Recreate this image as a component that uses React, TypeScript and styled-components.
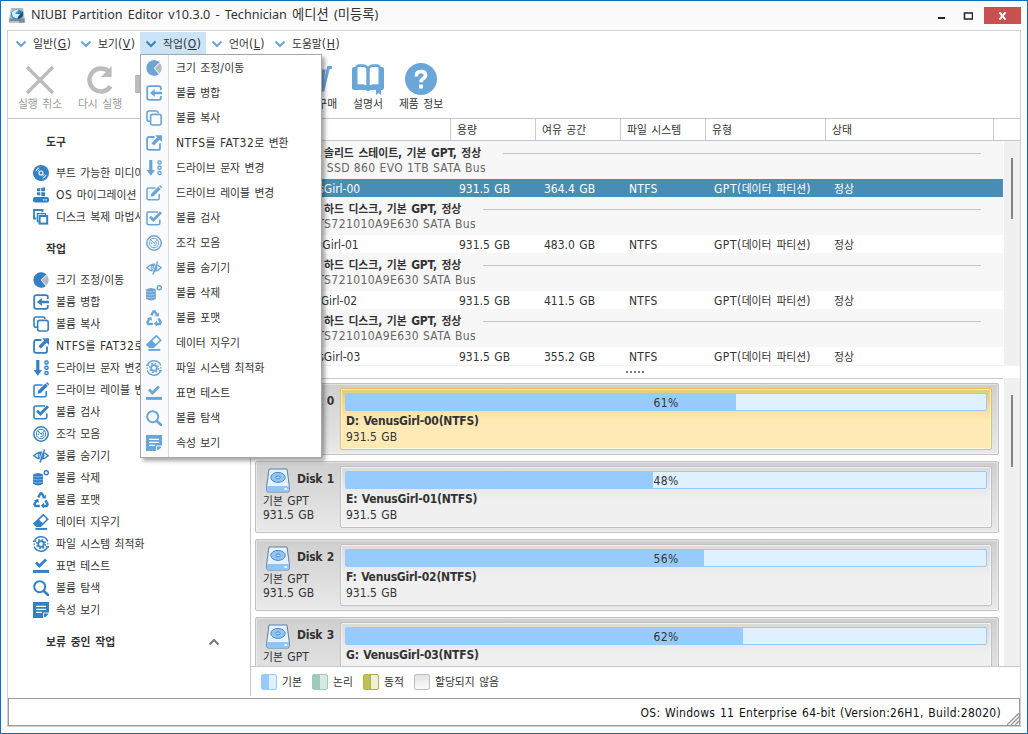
import React from "react";
import styled, { createGlobalStyle, css } from "styled-components";

const Global = createGlobalStyle`
  * { box-sizing: border-box; }
  body { margin: 0; background: #fff; overflow: hidden; }
`;

const latin = `"DejaVu Sans Condensed", "DejaVu Sans", "Noto Sans CJK KR", sans-serif`;

/* ---------- text ---------- */

const Hangul = styled.span`
  font-family: "Noto Sans CJK KR", sans-serif;
  font-size: 0.9em;
  line-height: 1;
  letter-spacing: 0;
`;

const mixed = (text: string) =>
  text
    .split(/([\uac00-\ud7a3]+)/)
    .filter(Boolean)
    .map((part, i) => (/[\uac00-\ud7a3]/.test(part) ? <Hangul key={i}>{part}</Hangul> : part));

const Label = styled.span<{ $bold?: boolean; $color?: string; $ls?: number; $ws?: number }>`
  display: block;
  height: 16px;
  line-height: 16px;
  white-space: pre;
  font-weight: ${(p) => (p.$bold ? 700 : 400)};
  color: ${(p) => p.$color ?? "inherit"};
  letter-spacing: ${(p) => p.$ls ?? 0}px;
  word-spacing: ${(p) => p.$ws ?? 1}px;
`;

/* ---------- icons ---------- */

const s = { fill: "none", stroke: "currentColor", strokeWidth: 1.8 } as const;

const glyphs: Record<string, React.ReactNode> = {
  disc: (
    <>
      <circle cx="8" cy="8" r="8" fill="currentColor" />
      <circle cx="8" cy="8" r="2" fill="none" stroke="#fff" strokeWidth="1.1" />
      <path d="M2.8 6.2A5.5 5.5 0 0 1 6.2 2.8M13.2 9.8a5.5 5.5 0 0 1-3.4 3.4M4.8 6.4A3.6 3.6 0 0 1 6.4 4.8M11.2 9.6A3.6 3.6 0 0 1 9.6 11.2" fill="none" stroke="#fff" strokeWidth="1" />
    </>
  ),
  os: (
    <>
      <path d="M4 1.6l3.3-.6v3.3H4zM8.2.9l3.8-.7v4.1H8.2zM4 5.2h3.3v3.4L4 8.1zM8.2 5.2H12v4L8.2 8.7z" fill="currentColor" />
      <rect x="0" y="10" width="16" height="5.6" rx="2" fill="currentColor" />
      <path d="M10 12.8h1.4M12.4 12.8h1.4" stroke="#fff" strokeWidth="1.2" />
    </>
  ),
  clone: (
    <>
      <path d="M3.3 9.5H1V1h8.500v2" {...s} />
      <path d="M7 12.5H4.4V4.6h8v2" {...s} strokeWidth={1.3} />
      <rect x="6.6" y="7" width="7.600" height="7.600" fill="#fff" stroke="currentColor" strokeWidth="2" />
    </>
  ),
  pie: (
    <>
      <circle cx="8" cy="8" r="7.7" fill="#b4bac3" />
      <path d="M13.8 2.6A7.7 7.7 0 1 0 13 14L8.2 8z" fill="currentColor" />
      <path d="M13.8 2.6L8.2 8l5 6" fill="none" stroke="#fff" strokeWidth="1" />
    </>
  ),
  merge: (
    <>
      <path d="M14.8 5V3Q14.8 1.2 13 1.2H3.2Q1.2 1.2 1.2 3.2v9.6Q1.2 14.8 3.2 14.8H13q1.8 0 1.8-1.8v-2" {...s} />
      <path d="M4 8l4.8-4v2.7H16v2.6H8.8V12z" fill="currentColor" />
    </>
  ),
  copy: (
    <>
      <path d="M4 11.2H3Q1 11.2 1 9.2V3Q1 1 3 1h7.2q1.8 0 1.8 2" {...s} strokeWidth={1.6} />
      <rect x="4.6" y="4.4" width="10.6" height="10.6" rx="2" fill="none" stroke="currentColor" strokeWidth="1.6" />
    </>
  ),
  convert: (
    <>
      <path d="M8.5 2H3Q1.1 2 1.1 4v9q0 1.9 2 1.9H12q2 0 2-2V8.6" {...s} />
      <path d="M9.3.2H16v6.7l-2.3-2.2-5.9 5.9-2.4-2.4 5.9-5.8z" fill="currentColor" />
    </>
  ),
  letter: (
    <>
      <path d="M3.2 0h3.2v10H9L4.8 15.8.6 10h2.6z" fill="currentColor" />
      <g fill="none" stroke="currentColor" strokeWidth="1.4">
        <rect x="12" y="1" width="3" height="3" rx="1" />
        <rect x="12" y="6.2" width="3" height="3" rx="1" />
        <rect x="12" y="11.5" width="3" height="3" rx="1" />
      </g>
    </>
  ),
  edit: (
    <>
      <path d="M9.5 3H2.6Q1 3 1 4.6v8.6q0 1.6 1.6 1.6h9q1.6 0 1.6-1.6V9" {...s} strokeWidth={1.5} />
      <path d="M4.6 11.8l.8-3.2 7-7 2.4 2.4-7 7z" fill="currentColor" />
      <path d="M13 1l1-1 2.2 2.2-1 1z" fill="currentColor" />
    </>
  ),
  check: (
    <>
      <path d="M12 2H2.6Q1 2 1 3.6v9.6q0 1.6 1.6 1.6h9.6q1.6 0 1.6-1.6V9.6" {...s} strokeWidth={1.6} />
      <path d="M4 6.8L7.4 10l7.6-7.8" {...s} strokeWidth={2.8} />
    </>
  ),
  defrag: (
    <>
      <circle cx="8" cy="8" r="7.2" {...s} strokeWidth={1.5} />
      <circle cx="8" cy="8" r="4.7" {...s} strokeWidth={1} />
      <path d="M4.5 4.5L8 8l3.6-3.2M8.2 8l1.2 1.2M5.6 9.2a2.6 2.6 0 0 1 1-3M10.4 7a2.6 2.6 0 0 1-3 3.6" {...s} strokeWidth={1} />
    </>
  ),
  hide: (
    <>
      <path d="M.8 7.8Q8 .6 15.2 7.8 8 14.6.8 7.8z" {...s} strokeWidth={1.4} />
      <circle cx="8" cy="7.6" r="3.4" fill="currentColor" />
      <path d="M6.4 6q-.8 1.4 0 2.8" fill="none" stroke="#fff" strokeWidth=".8" />
      <path d="M11.4 1.6L7 14.4" {...s} strokeWidth={1.6} />
      <path d="M10.1 2.4L6.2 13" stroke="#fff" strokeWidth=".7" />
    </>
  ),
  remove: (
    <>
      <path d="M0 4.5Q5 1.4 10 4.5v9.2Q5 17.3 0 13.7z" fill="currentColor" />
      <path d="M0 6.2q5 1.8 10 0M0 9.1q5 1.8 10 0M0 12q5 1.8 10 0" fill="none" stroke="#fff" strokeWidth=".5" opacity=".75" />
      <circle cx="13.3" cy="2.7" r="2" {...s} strokeWidth={1.5} />
    </>
  ),
  recycle: (
    <>
      <path d="M5.3 5.3L7.4 1.5h1.4l2 3.3" {...s} strokeWidth={2.4} />
      <path d="M3.4 8.6l-2 3.7.9 1.7h4.5" {...s} strokeWidth={2.4} />
      <path d="M12.4 8.4l2.2 3.9-.9 1.7h-3" {...s} strokeWidth={2.4} />
      <path d="M8.8 6.2l3.9.4.5-4zM1 8.6l4.2-1.8.9 4zM11 10.6v6L7.9 13.8z" fill="currentColor" />
    </>
  ),
  erase: (
    <>
      <path d="M10.3.8l4.4 4.4-7.2 7H3.4L1 9.6z" {...s} strokeWidth={1.6} />
      <path d="M5.4 5l4.8 4.6-2.7 2.8H3.4L.6 9.6z" fill="currentColor" />
      <path d="M2.4 14.9h11.8" {...s} strokeWidth={2} />
    </>
  ),
  optimize: (
    <>
      <path d="M1.6 4.6A7.3 7.3 0 0 1 14.8 5.4M14.4 11.4A7.3 7.3 0 0 1 1.2 10.6" {...s} strokeWidth={1.4} />
      <circle cx="8" cy="8" r="2.8" {...s} strokeWidth={1.8} />
      <circle cx="8" cy="8" r="4.3" {...s} strokeWidth={1.6} strokeDasharray="1.69 1.69" />
      <path d="M0 5.2h3.2M12.8 10.8H16M.6 8.2h1.2M14.2 7.8h1.2" {...s} strokeWidth={1.4} />
    </>
  ),
  surface: (
    <>
      <path d="M3 4.6l3.4 3.5L13 1.4" {...s} strokeWidth={2.8} />
      <path d="M0 13.4h16" {...s} strokeWidth={3} />
    </>
  ),
  search: (
    <>
      <circle cx="6.7" cy="6.7" r="5.5" {...s} strokeWidth={2} />
      <path d="M10.6 10.8l4.5 4.2" {...s} strokeWidth={2.6} strokeLinecap="round" />
    </>
  ),
  props: (
    <>
      <path d="M0 0h16v10.5L10.5 16H0z" fill="currentColor" />
      <path d="M3 4.3h10M3 7.3h10M3 10.3h6" stroke="#fff" strokeWidth="1.3" />
      <path d="M10.5 16v-5H16" fill="none" stroke="#fff" strokeWidth=".9" />
      <path d="M12 15.5V12h3.5z" fill="currentColor" />
    </>
  ),
};

const IconSvg = styled.svg`
  display: block;
  flex: none;
`;
const Icon = ({ name }: { name: string }) => (
  <IconSvg width="16" height="16" viewBox="0 0 16 16">
    {glyphs[name]}
  </IconSvg>
);

/* ---------- window ---------- */

const Window = styled.div`
  position: relative;
  width: 1028px;
  height: 734px;
  padding: 0 6px;
  display: flex;
  flex-direction: column;
  overflow: hidden;
  border: 1px solid #0971bd;
  background: #fbfbfc;
  color: #333;
  font-family: ${latin};
  font-size: 12px;
`;

const TitleBar = styled.header`
  height: 29px;
  flex: none;
  display: flex;
  align-items: flex-start;
  padding-left: 2px;
`;
const AppMark = styled.svg`
  flex: none;
  margin-top: 6px;
`;
const Title = styled.div`
  flex: 1;
  margin: 4px 0 0 6px;
  font: 12.6px/20px "Noto Sans", "Noto Sans CJK KR", sans-serif;
  word-spacing: 1.9px;
  white-space: pre;
  ${Hangul} {
    font-size: 13.3px;
  }
`;
const Caption = styled.svg`
  flex: none;
  margin: 10px 11px 0 0;
`;
const CloseButton = styled.div`
  width: 37px;
  height: 17px;
  margin-top: 6px;
  display: flex;
  align-items: center;
  justify-content: center;
  background: #c75050;
`;

const Frame = styled.div`
  width: 1014px;
  height: 697px;
  flex: none;
  display: flex;
  flex-direction: column;
  border: 1px solid #d0d0d3;
  background: #fff;
`;

const MenuBar = styled.nav`
  height: 24px;
  flex: none;
  display: flex;
  padding-top: 1px;
`;
const MenuTab = styled.div<{ $w: number; $pad: number; $active?: boolean }>`
  width: ${(p) => p.$w}px;
  height: 22px;
  display: flex;
  align-items: center;
  gap: 6px;
  padding: 1px 0 0 ${(p) => p.$pad}px;
  color: #333;
  background: ${(p) => (p.$active ? "#cce4f7" : "transparent")};
  svg { color: ${(p) => (p.$active ? "#3a80bb" : "#6ba3d2")}; }
`;

const Toolbar = styled.div`
  height: 64px;
  flex: none;
  display: flex;
  border-bottom: 1px solid #c2c6c9;
`;
const Tool = styled.div<{ $w: number; $off?: boolean }>`
  width: ${(p) => p.$w}px;
  flex: none;
  display: flex;
  flex-direction: column;
  align-items: center;
  padding-top: 7px;
  color: ${(p) => (p.$off ? "#bcbcbc" : "#6ba6d9")};
`;

const Body = styled.div`
  height: 577px;
  flex: none;
  display: flex;
`;

/* ---------- sidebar ---------- */

const Sidebar = styled.aside`
  width: 243px;
  height: 577px;
  flex: none;
  border-right: 1px solid #c6c9cc;
  color: #333;
`;
const SideHead = styled.div<{ $top: number; $bottom: number }>`
  display: flex;
  align-items: center;
  justify-content: space-between;
  padding: ${(p) => `${p.$top}px 30px ${p.$bottom}px 38px`};
`;
const SideItem = styled.div`
  height: 22px;
  display: flex;
  align-items: center;
  gap: 7px;
  padding-left: 25px;
  overflow: hidden;
  svg { color: #3480c4; }
`;

/* ---------- volume list ---------- */

const Main = styled.main`
  width: 769px;
  display: flex;
  flex-direction: column;
`;
const HeadRow = styled.div`
  height: 22px;
  flex: none;
  display: flex;
  border-bottom: 1px solid #c3c8cc;
`;
const HeadCell = styled.div<{ $w: number }>`
  width: ${(p) => p.$w}px;
  padding: 3px 0 0 6px;
  border-right: 1px solid #c8cbce;
`;
const Scrollable = styled.div<{ $h: number }>`
  height: ${(p) => p.$h}px;
  flex: none;
  display: flex;
  overflow: hidden;
`;
const Pane = styled.div`
  width: 752px;
  flex: none;
`;
const Track = styled.div<{ $pad: number }>`
  width: 16px;
  margin-left: 1px;
  padding: ${(p) => p.$pad}px 0 0 7px;
  background: #f0f0f0;
`;
const Thumb = styled.div<{ $h: number }>`
  width: 2px;
  height: ${(p) => p.$h}px;
  background: #858585;
`;
const Group = styled.div`
  height: 38px;
  padding-top: 5px;
  background: #f7f7f7;
`;
const GroupTop = styled.div`
  height: 14px;
  display: flex;
  align-items: center;
  padding: 0 22px 0 73px;
`;
const Rule = styled.div`
  flex: 1;
  height: 1px;
  margin-left: 22px;
  background: #c3c6c9;
`;
const Model = styled.div<{ $x: number }>`
  padding-left: ${(p) => p.$x}px;
  color: #666;
`;
const Row = styled.div<{ $on?: boolean }>`
  height: 18px;
  display: flex;
  align-items: center;
  padding-top: 2px;
  background: ${(p) => (p.$on ? "#478db4" : "#fff")};
  color: ${(p) => (p.$on ? "#fff" : "#333")};
`;
const Cell = styled.div<{ $w: number; $pad?: number }>`
  width: ${(p) => p.$w}px;
  flex: none;
  padding-left: ${(p) => p.$pad ?? 8}px;
`;
const Splitter = styled.div`
  height: 13px;
  flex: none;
  display: flex;
  justify-content: center;
  gap: 2px;
  padding: 5px 2px 0 0;
  border-top: 1px solid #f2f2f2;
`;
const Dot = styled.i`
  width: 2px;
  height: 2px;
  background: #777;
`;

/* ---------- disk map ---------- */

const DiskPane = styled(Pane)`
  border-top: 1px solid #c3c8cc;
  padding: 4px 0 0 4px;
`;
const DiskCard = styled.section`
  width: 744px;
  height: 72px;
  margin-bottom: 6px;
  display: flex;
  padding: 4px 0 0 4px;
  border: 1px solid #c1c1c1;
  border-radius: 2px;
  background: linear-gradient(#cfcfcf, #e9e9e9);
  box-shadow: inset 0 0 0 1px rgba(255, 255, 255, 0.4);
`;
const DiskInfo = styled.div`
  width: 80px;
  flex: none;
  padding: 2px 0 0 3px;
`;
const DiskName = styled.div`
  height: 25px;
  display: flex;
  align-items: flex-start;
  gap: 7px;
  padding-left: 3px;
  ${Label} {
    margin-top: 3px;
  }
`;
const DiskLine = styled.div`
  height: 14px;
`;
const Partition = styled.div<{ $on?: boolean }>`
  width: 652px;
  height: 62px;
  padding: 4px;
  border: 1px solid #c0c0c0;
  border-radius: 2px;
  background: linear-gradient(#dadada, #f0f0f0 32px);
  box-shadow: inset 0 0 0 1px rgba(255, 255, 255, 0.6);
  ${(p) =>
    p.$on &&
    css`
      border-color: #e6bd62;
      background: linear-gradient(#e4cb72, #ffeab6 32px);
    `}
`;
const Usage = styled.div`
  position: relative;
  width: 642px;
  height: 18px;
  margin-bottom: 2px;
  border: 1px solid #98cbfd;
  border-radius: 2px;
  background: #dff0fe;
`;
const UsageFill = styled.div`
  height: 16px;
  background: #98cbfd;
`;
const UsageText = styled.div`
  position: absolute;
  inset: 1px 0 0 0;
  display: flex;
  justify-content: center;
`;
const PartLine = styled.div`
  height: 16px;
  padding-left: 1px;
`;

const Legend = styled.div`
  height: 29px;
  flex: none;
  display: flex;
  padding: 7px 0 0 10px;
  border-top: 1px solid #c3c8cc;
`;
const LegendItem = styled.div`
  min-width: 51px;
  display: flex;
  gap: 5px;
`;
const Swatch = styled.i<{ $line: string; $bg: string }>`
  width: 16px;
  height: 16px;
  border: 1px solid ${(p) => p.$line};
  border-radius: 2px;
  background: ${(p) => p.$bg};
`;

const StatusBar = styled.footer`
  position: relative;
  width: 1012px;
  height: 28px;
  flex: none;
  margin-top: 2px;
  display: flex;
  align-items: center;
  justify-content: flex-end;
  padding: 2px 18px 0 0;
  border: 1px solid #999;
  color: #111;
`;
const Grip = styled.svg`
  position: absolute;
  right: 0;
  bottom: 0;
`;

/* ---------- drop-down ---------- */

const DropDown = styled.div`
  position: absolute;
  left: 139px;
  top: 53px;
  width: 182px;
  height: 404px;
  border: 1px solid #a6a6a6;
  background: linear-gradient(90deg, #fafbfd 27px, #d9dce1 27px, #d9dce1 28px, #fff 28px);
  box-shadow: 3px 3px 4px rgba(0, 0, 0, 0.35);
`;
const DropItem = styled.div`
  height: 25px;
  display: flex;
  align-items: center;
  gap: 14px;
  padding-left: 5px;
  svg { color: #6ba5d8; }
`;

/* ---------- data ---------- */

const tabs = [
  { text: "일반", key: "G", w: 65, pad: 7 },
  { text: "보기", key: "V", w: 67, pad: 7 },
  { text: "작업", key: "O", w: 66, pad: 5, active: true },
  { text: "언어", key: "L", w: 63, pad: 5 },
  { text: "도움말", key: "H", w: 80, pad: 5 },
];

const tools = [
  ["disc", "부트 가능한 미디어"],
  ["os", "OS 마이그레이션"],
  ["clone", "디스크 복제 마법사"],
];

const actions = [
  ["pie", "크기 조정/이동"],
  ["merge", "볼륨 병합"],
  ["copy", "볼륨 복사"],
  ["convert", "NTFS를 FAT32로 변환"],
  ["letter", "드라이브 문자 변경"],
  ["edit", "드라이브 레이블 변경"],
  ["check", "볼륨 검사"],
  ["defrag", "조각 모음"],
  ["hide", "볼륨 숨기기"],
  ["remove", "볼륨 삭제"],
  ["recycle", "볼륨 포맷"],
  ["erase", "데이터 지우기"],
  ["optimize", "파일 시스템 최적화"],
  ["surface", "표면 테스트"],
  ["search", "볼륨 탐색"],
  ["props", "속성 보기"],
];

const columns: [string, number][] = [
  ["", 200],
  ["용량", 85],
  ["여유 공간", 85],
  ["파일 시스템", 85],
  ["유형", 120],
  ["상태", 168],
];

const ssd = "솔리드 스테이트, 기본 GPT, 정상";
const hdd = "하드 디스크, 기본 GPT, 정상";
const disks = [
  { letter: "D", kind: ssd, model: "Samsung SSD 860 EVO 1TB SATA Bus", x: 19, free: "364.4 GB", used: 61, on: true },
  { letter: "E", kind: hdd, model: "HITACHI HTS721010A9E630 SATA Bus", x: 8, free: "483.0 GB", used: 48 },
  { letter: "F", kind: hdd, model: "HITACHI HTS721010A9E630 SATA Bus", x: 8, free: "411.5 GB", used: 56 },
  { letter: "G", kind: hdd, model: "HITACHI HTS721010A9E630 SATA Bus", x: 8, free: "355.2 GB", used: 62, partial: true },
];

const legend = [
  { text: "기본", line: "#98cbfd", bg: "linear-gradient(90deg,#98cbfd 50%,#dff0fe 50%)" },
  { text: "논리", line: "#9fc9ba", bg: "linear-gradient(90deg,#9fc9ba 50%,#d7e9e2 50%)" },
  { text: "동적", line: "#b2b43c", bg: "linear-gradient(90deg,#c0c054 45%,#b2b43c 45%,#b2b43c 52%,#eff0d3 52%)" },
  { text: "할당되지 않음", line: "#bdbdbd", bg: "linear-gradient(#e2e2e2,#fbfbfb)" },
];

const DiskDrawing = () => (
  <svg width="24" height="25" viewBox="0 0 24 25">
    <path d="M3 1h18l2.3 17v4.5q0 1.5-1.5 1.5H2.2Q.7 24 .7 22.5V18z" fill="#e6f3fe" stroke="#5a7fa5" />
    <path d="M1.2 18h21.600v4.300q0 1.200-1.200 1.200H2.400q-1.200 0-1.200-1.200z" fill="#8ec5fa" />
    <ellipse cx="12" cy="9.4" rx="7.2" ry="5" fill="#8ec5fa" stroke="#4d88c4" />
    <ellipse cx="12" cy="9.4" rx="2.2" ry="1.5" fill="#b9dcfb" stroke="#4d88c4" />
    <rect x="18.5" y="20" width="2.4" height="2" fill="#fff" />
  </svg>
);

export default function App() {
  return (
    <>
      <Global />
      <Window>
        <TitleBar>
          <AppMark width="16" height="17" viewBox="0 0 16 17">
            <path d="M2 1h12l1.6 10v4.5H.4V11z" fill="#a9bcc9" />
            <path d="M.4 11.5h15.2v4.2H.4z" fill="#7d8b97" />
            <ellipse cx="8" cy="7.5" rx="6" ry="5" fill="#2f86b9" />
            <path d="M3 5q3-3 7-2L6 6.5l5 1-3 4q-6-1-5-6.5z" fill="#d4edf7" />
            <path d="M9 10l5-6v4q-1 3-5 4z" fill="#17547f" />
            <path d="M1 15h9" stroke="#e4ebf0" />
          </AppMark>
          <Title>{mixed("NIUBI Partition Editor v10.3.0 - Technician 에디션 (미등록)")}</Title>
          <Caption width="36" height="9" viewBox="0 0 36 9">
            <path d="M1 7h7" stroke="#222" strokeWidth="2" />
            <path d="M27.5 2h8v6h-8zM27 2h9" fill="none" stroke="#222" strokeWidth="1.5" />
          </Caption>
          <CloseButton>
            <svg width="9" height="8" viewBox="0 0 9 8">
              <path d="M1.5 .3l6 7.4M7.5 .3L1.5 7.7" stroke="#fff" strokeWidth="2" />
            </svg>
          </CloseButton>
        </TitleBar>

        <Frame>
          <MenuBar>
            {tabs.map((t) => (
              <MenuTab key={t.key} $w={t.w} $pad={t.pad} $active={t.active}>
                <svg width="12" height="8" viewBox="0 0 12 8">
                  <path d="M1.5 1.5L6 6l4.500-4.500" fill="none" stroke="currentColor" strokeWidth="2" />
                </svg>
                <Label $ls={0.6}>
                  {mixed(t.text)}(<u>{t.key}</u>)
                </Label>
              </MenuTab>
            ))}
          </MenuBar>

          <Toolbar>
            <Tool $w={64} $off>
              <svg width="32" height="34" viewBox="0 0 32 34">
                <path d="M3 5l26 26M29 5L3 31" stroke="currentColor" strokeWidth="3.4" />
              </svg>
              <Label $color="#9b9b9b">{mixed("실행 취소")}</Label>
            </Tool>
            <Tool $w={56} $off>
              <svg width="32" height="34" viewBox="0 0 32 34">
                <path d="M24.4 9.2A11.5 11.5 0 1 0 26.6 24.2" fill="none" stroke="currentColor" strokeWidth="4.4" />
                <path d="M27.6 4v11H17z" fill="currentColor" />
              </svg>
              <Label $color="#9b9b9b">{mixed("다시 실행")}</Label>
            </Tool>
            <Tool $w={60} $off>
              <svg width="50" height="34" viewBox="0 0 50 34">
                <path d="M2 13h46v18H2z" fill="currentColor" />
              </svg>
            </Tool>
            <Tool $w={97} />
            <Tool $w={60}>
              <svg width="36" height="34" viewBox="0 0 36 34">
                <path d="M1 9h26l-3 15H5zM35 5.5H31.5L26 28H7" fill="none" stroke="currentColor" strokeWidth="3" />
              </svg>
              <Label $color="#333">{mixed("지금 구매")}</Label>
            </Tool>
            <Tool $w={46}>
              <svg width="32" height="34" viewBox="0 0 32 34">
                <path d="M16 4.500Q14 2.200 11 2.200H7Q4 2.200 3.200 5H2Q0 5 0 7V26q0 2 2 2h11q1.500 0 3 1.500Q17.500 28 19 28h11q2 0 2-2V7q0-2-2-2h-1.200Q28 2.200 25 2.200h-4q-3 0-5 2.300z" fill="currentColor" />
                <path d="M5.500 6.500q0-1.500 1.500-1.500h4q3.300 0 3.300 3v15.500q-2-1.300-4-1.300H5.500zM26.500 6.500Q26.500 5 25 5h-4q-3.300 0-3.300 3v15.500q2-1.300 4-1.300h4.800z" fill="#fff" />
                <path d="M24 27h5v6l-2.500-2-2.500 2z" fill="currentColor" />
              </svg>
              <Label $color="#333">{mixed("설명서")}</Label>
            </Tool>
            <Tool $w={60}>
              <svg width="32" height="34" viewBox="0 0 32 34">
                <circle cx="16" cy="17" r="16" fill="currentColor" />
                <path d="M11.5 14.5v-1.300q0-3.700 4.500-3.700t4.500 3.600q0 2.200-2.300 3.500-2.200 1.200-2.200 3.600" fill="none" stroke="#fff" strokeWidth="3.6" />
                <path d="M14 22.5h4v4h-4z" fill="#fff" />
              </svg>
              <Label $color="#333">{mixed("제품 정보")}</Label>
            </Tool>
          </Toolbar>

          <Body>
            <Sidebar>
              <SideHead $top={15} $bottom={12}>
                <Label $bold>{mixed("도구")}</Label>
              </SideHead>
              {tools.map(([icon, text]) => (
                <SideItem key={text}>
                  <Icon name={icon} />
                  <Label $ls={0.5} $ws={0.5}>{mixed(text)}</Label>
                </SideItem>
              ))}
              <SideHead $top={13} $bottom={12}>
                <Label $bold>{mixed("작업")}</Label>
              </SideHead>
              {actions.map(([icon, text]) => (
                <SideItem key={text}>
                  <Icon name={icon} />
                  <Label $ls={0.5} $ws={0.5}>{mixed(text)}</Label>
                </SideItem>
              ))}
              <SideHead $top={13} $bottom={0}>
                <Label $bold>{mixed("보류 중인 작업")}</Label>
                <svg width="12" height="8" viewBox="0 0 12 8">
                  <path d="M1.5 6.5L6 2l4.500 4.500" fill="none" stroke="#777" strokeWidth="2" />
                </svg>
              </SideHead>
            </Sidebar>

            <Main>
              <HeadRow>
                {columns.map(([text, w], i) => (
                  <HeadCell key={i} $w={w}>
                    <Label>{mixed(text)}</Label>
                  </HeadCell>
                ))}
              </HeadRow>
              <Scrollable $h={224}>
                <Pane>
                  {disks.map((d, i) => (
                    <React.Fragment key={d.letter}>
                      <Group>
                        <GroupTop>
                          <Label $bold $ls={-0.2}>{mixed(d.kind)}</Label>
                          <Rule />
                        </GroupTop>
                        <Model $x={d.x}>
                          <Label $ws={0} $ls={0.4}>{d.model}</Label>
                        </Model>
                      </Group>
                      <Row $on={d.on}>
                        <Cell $w={200} $pad={24}>
                          <Label>{`${d.letter}: VenusGirl-0${i}`}</Label>
                        </Cell>
                        <Cell $w={85}>
                          <Label>931.5 GB</Label>
                        </Cell>
                        <Cell $w={85}>
                          <Label>{d.free}</Label>
                        </Cell>
                        <Cell $w={85}>
                          <Label $ls={0.3}>NTFS</Label>
                        </Cell>
                        <Cell $w={120}>
                          <Label $ls={0.5}>{mixed("GPT(데이터 파티션)")}</Label>
                        </Cell>
                        <Cell $w={168}>
                          <Label>{mixed("정상")}</Label>
                        </Cell>
                      </Row>
                    </React.Fragment>
                  ))}
                </Pane>
                <Track $pad={17}>
                  <Thumb $h={61} />
                </Track>
              </Scrollable>
              <Splitter>
                <Dot />
                <Dot />
                <Dot />
                <Dot />
                <Dot />
              </Splitter>
              <Scrollable $h={288}>
                <DiskPane>
                  {disks.map((d, i) => (
                    <DiskCard key={d.letter}>
                      <DiskInfo>
                        <DiskName>
                          <DiskDrawing />
                          <Label $bold $ls={-0.25}>{`Disk ${i}`}</Label>
                        </DiskName>
                        <DiskLine>
                          <Label>{mixed("기본 GPT")}</Label>
                        </DiskLine>
                        {!d.partial && (
                          <DiskLine>
                            <Label>931.5 GB</Label>
                          </DiskLine>
                        )}
                      </DiskInfo>
                      <Partition $on={d.on}>
                        <Usage>
                          <UsageFill style={{ width: `${d.used}%` }} />
                          <UsageText>
                            <Label $ls={0.4}>{`${d.used}%`}</Label>
                          </UsageText>
                        </Usage>
                        <PartLine>
                          <Label $bold $ls={-0.22}>{`${d.letter}: VenusGirl-0${i}(NTFS)`}</Label>
                        </PartLine>
                        {!d.partial && (
                          <PartLine>
                            <Label>931.5 GB</Label>
                          </PartLine>
                        )}
                      </Partition>
                    </DiskCard>
                  ))}
                </DiskPane>
                <Track $pad={17}>
                  <Thumb $h={72} />
                </Track>
              </Scrollable>
              <Legend>
                {legend.map((l) => (
                  <LegendItem key={l.text}>
                    <Swatch $line={l.line} $bg={l.bg} />
                    <Label>{mixed(l.text)}</Label>
                  </LegendItem>
                ))}
              </Legend>
            </Main>
          </Body>

          <StatusBar>
            <Label $ls={0.28}>OS: Windows 11 Enterprise 64-bit (Version:26H1, Build:28020)</Label>
            <Grip width="12" height="12" viewBox="0 0 12 12">
              <path d="M0 12L12 0M4 12l8-8M8 12l4-4" stroke="#999" strokeWidth="1.3" />
            </Grip>
          </StatusBar>
        </Frame>

        <DropDown>
          {actions.map(([icon, text]) => (
            <DropItem key={text}>
              <Icon name={icon} />
              <Label $ls={0.5} $ws={0.5}>{mixed(text)}</Label>
            </DropItem>
          ))}
        </DropDown>
      </Window>
    </>
  );
}
